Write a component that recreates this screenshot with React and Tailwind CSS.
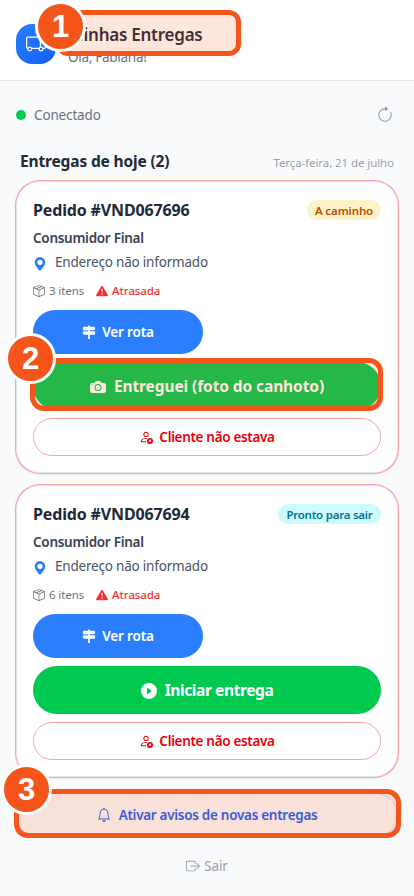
import React from 'react';
import {
    BsTruck,
    BsArrowClockwise,
    BsGeoAltFill,
    BsBoxSeam,
    BsExclamationTriangleFill,
    BsSignpost2Fill,
    BsCameraFill,
    BsPlayCircleFill,
    BsPersonX,
    BsBell,
    BsBoxArrowRight,
} from 'react-icons/bs';

const pedidos = [
    {
        codigo: 'VND067696',
        cliente: 'Consumidor Final',
        itens: 3,
        status: 'A caminho',
        statusClass: 'bg-[#fef3c6] text-[#bb4d00] w-[74px] tracking-[-0.12px]',
        acao: 'Entreguei (foto do canhoto)',
        acaoClass: 'tracking-[-0.1px]',
        icon: BsCameraFill,
        passo: 2,
    },
    {
        codigo: 'VND067694',
        cliente: 'Consumidor Final',
        itens: 6,
        status: 'Pronto para sair',
        statusClass: 'bg-[#cefafe] text-[#007595] w-[103px] tracking-[-0.24px]',
        acao: 'Iniciar entrega',
        acaoClass: 'tracking-[-0.4px]',
        icon: BsPlayCircleFill,
    },
];

// Moldura laranja com número, desenhada por cima do elemento destacado
const Destaque = ({ numero, className, badgeClass }) => (
    <div className={`absolute z-10 border-[5px] border-[#f5541b] bg-[#f5541b]/15 pointer-events-none ${className}`}>
        <span
            className={`absolute flex items-center justify-center w-[51px] h-[51px] rounded-full border-[3px] border-white bg-[#f5541b] text-white font-['Liberation_Sans'] font-bold text-[31px] leading-none ${badgeClass}`}
        >
            {numero}
        </span>
    </div>
);

const PedidoCard = ({ pedido }) => {
    const AcaoIcon = pedido.icon;

    return (
        <div className="h-[292px] bg-white rounded-3xl border border-gray-200 ring-1 ring-[#ffa2a2] px-4 pt-4 shadow-sm">
            <div className="flex items-center justify-between h-6">
                <h3 className="text-base font-bold text-[#1e2939] tracking-[-0.15px]">Pedido #{pedido.codigo}</h3>
                <span className={`h-5 pt-px flex items-center justify-center rounded-full text-[11.5px] font-semibold whitespace-nowrap ${pedido.statusClass}`}>
                    {pedido.status}
                </span>
            </div>
            <p className="mt-1.5 h-5 leading-5 text-[13.5px] font-semibold text-[#364153] tracking-[-0.28px]">{pedido.cliente}</p>
            <p className="mt-1 h-5 flex items-center gap-2 text-[13.5px] text-[#4a5565] tracking-[-0.2px]">
                <BsGeoAltFill className="w-3.5 h-3.5 text-[#2b7fff] mt-1" />
                Endereço não informado
            </p>
            <div className="mt-[9px] h-5 flex items-center gap-3 text-[11.5px] tracking-[-0.1px]">
                <span className="flex items-center gap-1 text-[#6a7282]">
                    <BsBoxSeam className="w-3 h-3" />
                    {pedido.itens} itens
                </span>
                <span className="flex items-center gap-1 text-[#fb2c36] font-medium">
                    <BsExclamationTriangleFill className="w-3 h-3" />
                    Atrasada
                </span>
            </div>

            <button className="mt-[9px] w-[170px] h-11 rounded-full bg-[#2b7fff] text-white text-[13.5px] font-semibold tracking-[-0.15px] flex items-center justify-center gap-1.5">
                <BsSignpost2Fill className="w-3.5 h-3.5" />
                Ver rota
            </button>

            <div className="relative mt-2">
                <button className={`w-full h-12 pt-px rounded-full bg-[#00c950] text-white text-[15.5px] font-bold flex items-center justify-center gap-2 ${pedido.acaoClass}`}>
                    <AcaoIcon className="w-4 h-4" />
                    {pedido.acao}
                </button>
                {pedido.passo && (
                    <Destaque
                        numero={pedido.passo}
                        className="-left-[3px] -top-1 w-[353px] h-[53px] rounded-[14px]"
                        badgeClass="-left-[30px] -top-[30px]"
                    />
                )}
            </div>

            <button className="mt-2 w-full h-[38px] rounded-full border border-[#ffa2a2] text-[#e7000b] text-[13.5px] font-semibold tracking-[-0.33px] flex items-center justify-center gap-1.5">
                <BsPersonX className="w-3.5 h-3.5" />
                Cliente não estava
            </button>
        </div>
    );
};

export default function App() {
    return (
        <div className="w-[414px] h-[896px] overflow-hidden bg-[#f9fafb] font-['Noto_Sans',sans-serif]">
            <header className="relative h-[81px] bg-white border-b border-gray-200 flex items-center gap-3 px-4 pt-2">
                <div className="w-10 h-10 rounded-2xl bg-linear-to-br from-[#2b7fff] to-[#155dfc] text-white flex items-center justify-center">
                    <BsTruck className="w-5 h-5" />
                </div>
                <div className="pt-0.5">
                    <h1 className="text-[17px] leading-6 font-semibold text-[#1e2939] tracking-[-0.25px]">Minhas Entregas</h1>
                    <p className="text-[13.5px] leading-5 text-[#6a7282] tracking-[-0.28px]">Olá, Fabiana!</p>
                </div>
                <Destaque
                    numero={1}
                    className="left-[56px] top-[10px] w-[185px] h-[46px] rounded-[12px]"
                    badgeClass="-left-[26px] -top-[14px]"
                />
            </header>

            <main className="px-4">
                <div className="mt-[22px] h-6 flex items-center justify-between">
                    <span className="flex items-center gap-2 text-[13.5px] text-[#6a7282] tracking-[-0.15px]">
                        <i className="w-2.5 h-2.5 rounded-full bg-[#00c950]" />
                        Conectado
                    </span>
                    <BsArrowClockwise className="w-[18px] h-[18px] mr-1 text-[#99a1af]" />
                </div>

                <div className="mt-[23px] h-6 px-1 flex items-center justify-between">
                    <h2 className="text-[15.5px] font-bold text-[#1e2939] tracking-[-0.15px]">Entregas de hoje (2)</h2>
                    <span className="pt-0.5 text-[11.5px] text-[#99a1af] tracking-[-0.08px]">Terça-feira, 21 de julho</span>
                </div>

                <div className="mt-[7px] flex flex-col gap-3">
                    {pedidos.map((pedido) => (
                        <PedidoCard key={pedido.codigo} pedido={pedido} />
                    ))}
                </div>

                <div className="relative mt-4">
                    <button className="w-full h-11 rounded-full border border-[#bedbff] bg-[#f9fafb] text-[#155dfc] text-[13.5px] font-semibold tracking-[-0.29px] flex items-center justify-center gap-2">
                        <BsBell className="w-3.5 h-3.5" />
                        Ativar avisos de novas entregas
                    </button>
                    <Destaque
                        numero={3}
                        className="-left-0.5 -top-1 w-[387px] h-[49px] rounded-[14px]"
                        badgeClass="-left-[18px] -top-[30px]"
                    />
                </div>

                <button className="mt-[17px] w-full h-6 flex items-center justify-center gap-1 text-[13.5px] text-[#99a1af] tracking-[-0.1px]">
                    <BsBoxArrowRight className="w-3.5 h-3.5" />
                    Sair
                </button>
            </main>
        </div>
    );
}
